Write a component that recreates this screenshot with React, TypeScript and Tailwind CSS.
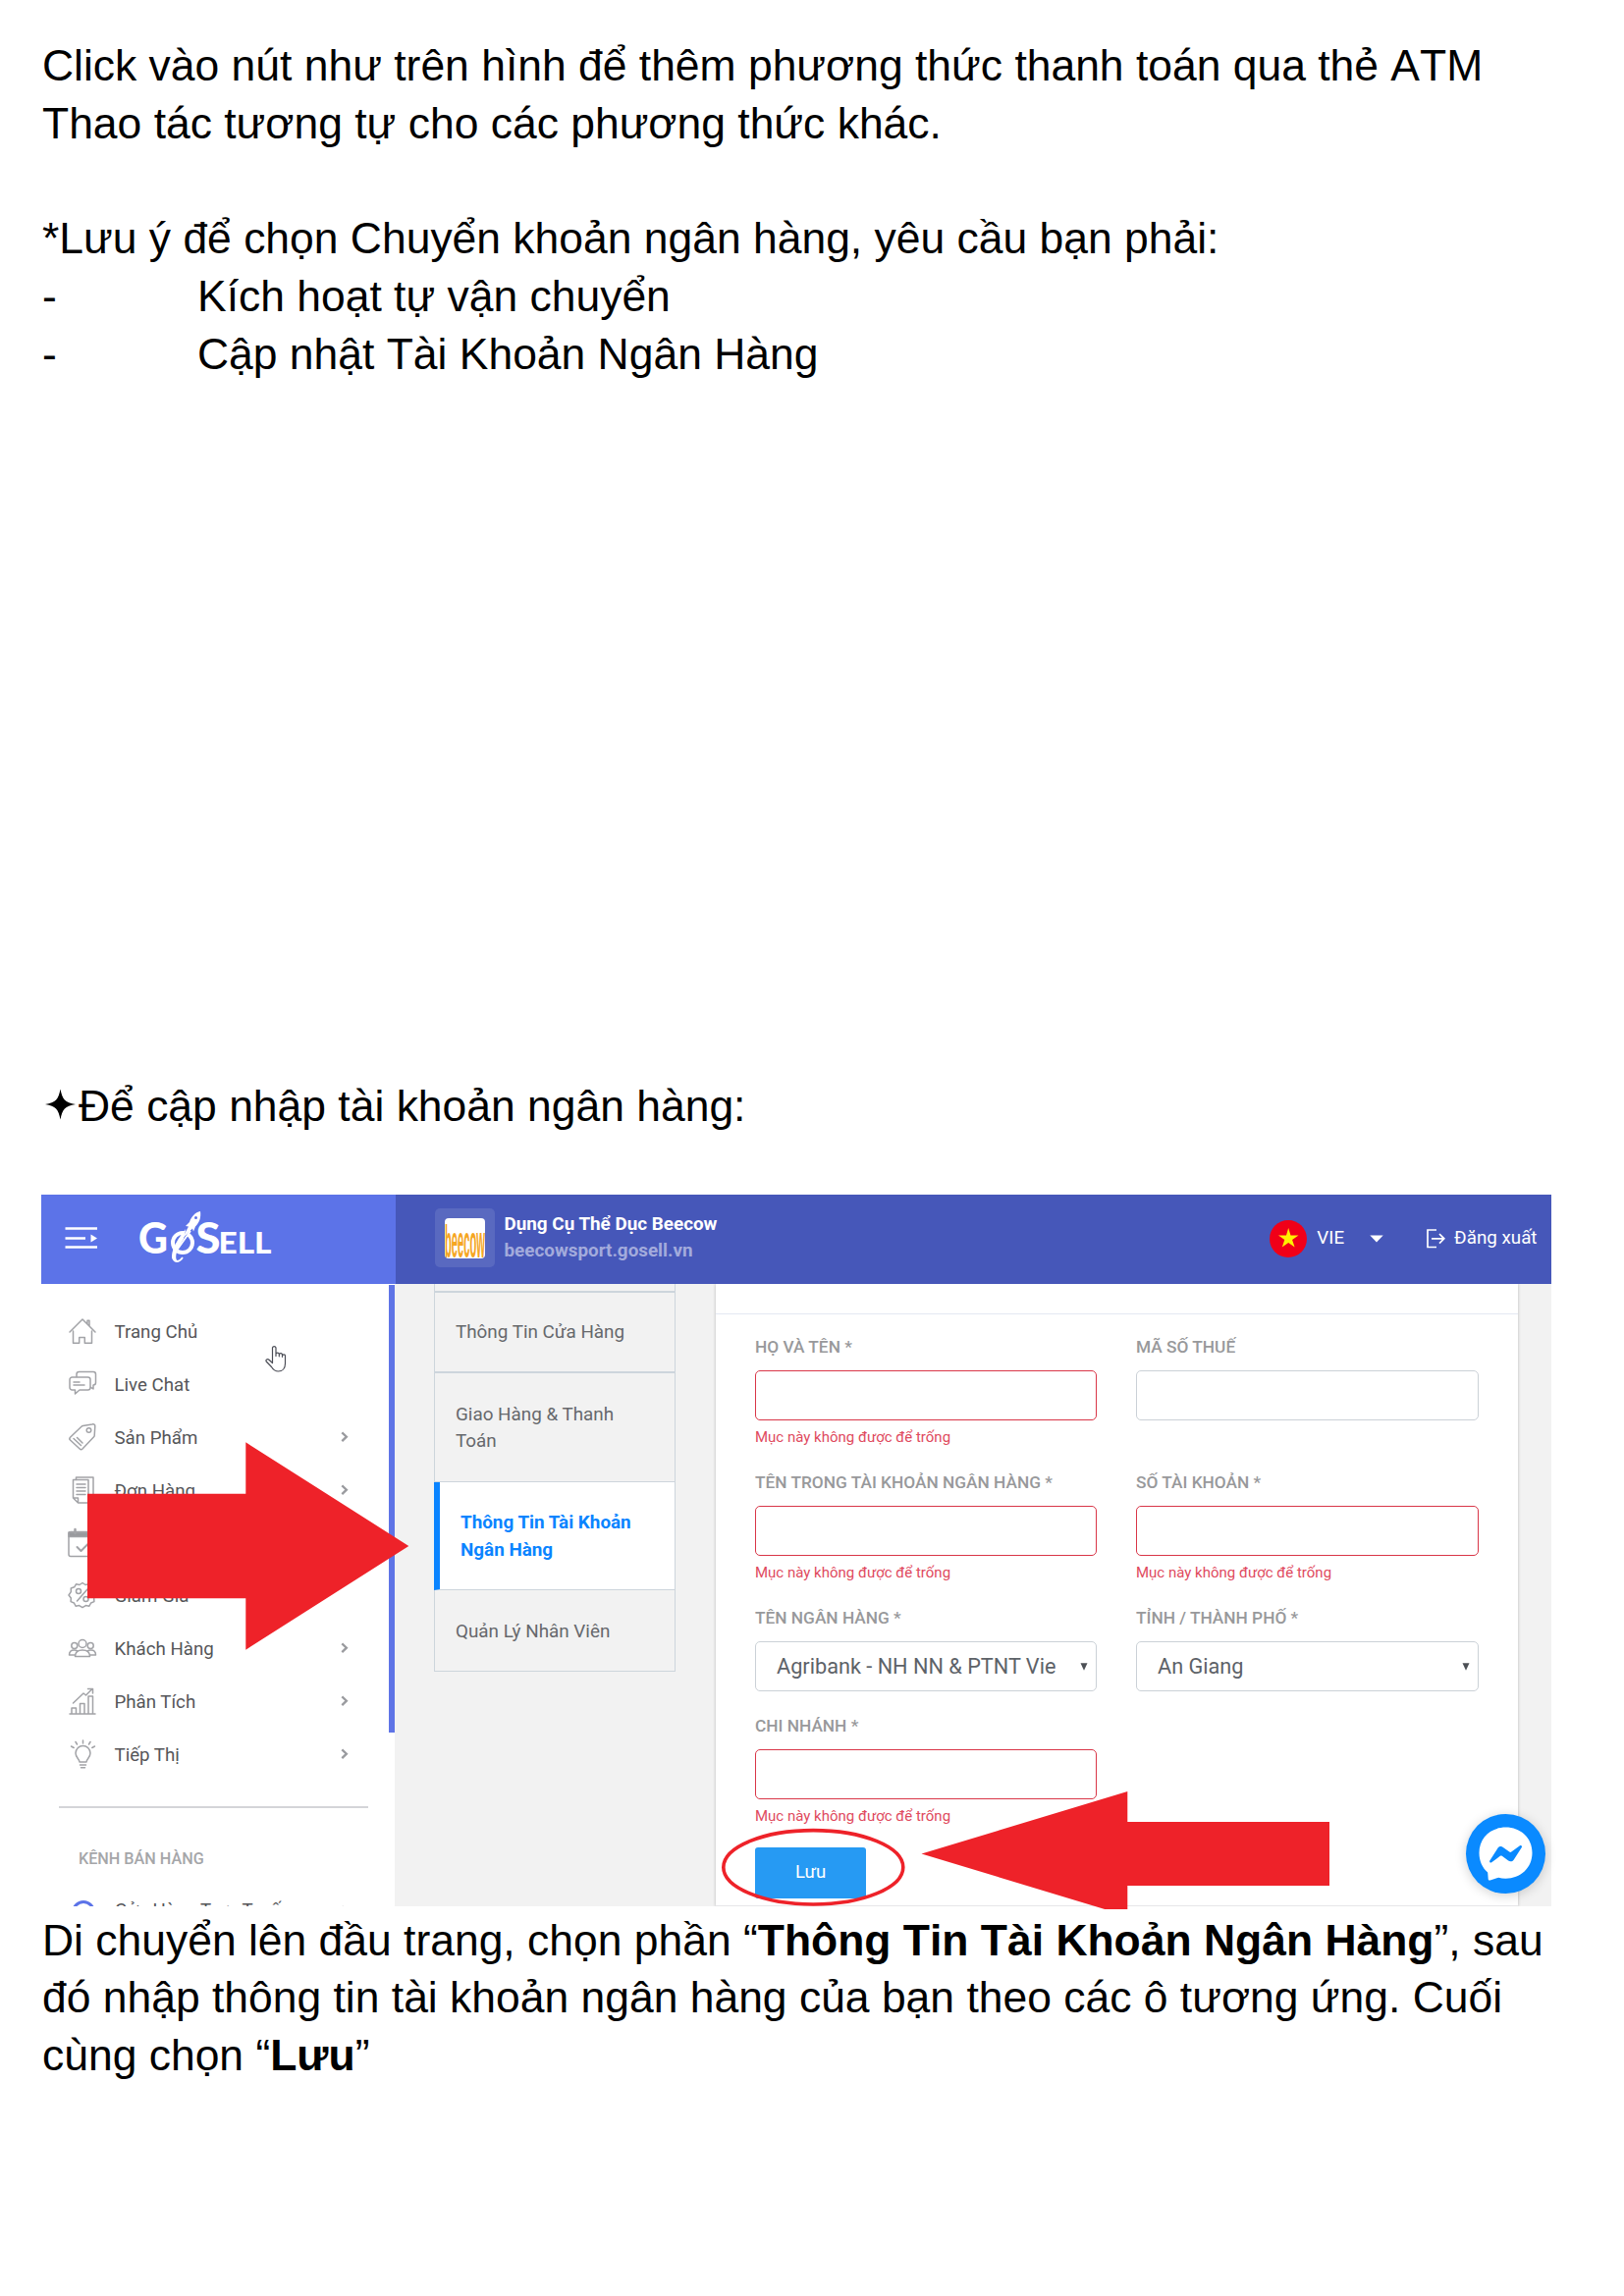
import React from 'react';

const DOC = "font-['Liberation_Sans',Arial,sans-serif] text-[44.44px] leading-[58.78px] text-black whitespace-nowrap [font-kerning:none]";

type IconProps = { children: React.ReactNode };

function NavIcon({ children }: IconProps) {
  return (
    <svg
      width="28"
      height="28"
      viewBox="0 0 28 28"
      fill="none"
      stroke="#a2a3a7"
      strokeWidth="1.5"
      strokeLinecap="round"
      strokeLinejoin="round"
      className="shrink-0 overflow-visible"
    >
      {children}
    </svg>
  );
}

const navItems: { label: string; arrow: boolean; icon: React.ReactNode }[] = [
  {
    label: 'Trang Chủ',
    arrow: false,
    icon: (
      <path d="M1 15 14 2l13 13M4.5 14v12.3h6.2v-5.8h5.6v5.8h7.2V14M19 6.5V3.2h2v5.5" />
    ),
  },
  {
    label: 'Live Chat',
    arrow: false,
    icon: (
      <>
        <path d="M3.5 7h16a2.5 2.5 0 0 1 2.5 2.5v8a2.5 2.5 0 0 1-2.5 2.5H11l-4.5 4v-4h-3A2.5 2.5 0 0 1 1 17.500v-8A2.500 2.500 0 0 1 3.500 7zM5 12h6M5 15h11" />
        <path d="M8 6.500V4a2.500 2.500 0 0 1 2.500-2.500H25A2.500 2.500 0 0 1 27.500 4v8.500A2.500 2.500 0 0 1 25 15v4l-2.500-1.700" />
      </>
    ),
  },
  {
    label: 'Sản Phẩm',
    arrow: true,
    icon: (
      <>
        <path d="M14.500 2.500 24 1a2 2 0 0 1 2.800 2l-.6 9.500a2 2 0 0 1-.6 1.300L14 26a2 2 0 0 1-2.800 0L1.500 17a2 2 0 0 1 0-2.800L13 3.200a3 3 0 0 1 1.500-.7z" />
        <circle cx="20.500" cy="7" r="2.300" />
        <path d="m5 15.500 7.500 7M8.500 14.500l5.500 5.500" />
      </>
    ),
  },
  {
    label: 'Đơn Hàng',
    arrow: true,
    icon: (
      <>
        <path d="M4.500 3.500H20V27H9.500l-5-5zM4.500 22h5v5" />
        <path d="M7.500 3.500V1H25v21.500h-5M8 8h9M8 11.500h9M8 15h9M8 18.500h9" />
      </>
    ),
  },
  {
    label: 'Đặt Chỗ',
    arrow: true,
    icon: (
      <>
        <rect x="0" y="2.500" width="28" height="25" rx="2" />
        <path d="M0 3h28v4.500H0z" fill="#98999d" />
        <path d="M6.500 0v4M21.500 0v4" strokeWidth="2.500" />
        <path d="m8.500 18 4 4 7.500-7.500" strokeWidth="2" />
      </>
    ),
  },
  {
    label: 'Giảm Giá',
    arrow: false,
    icon: (
      <>
        <path d="m14 1.500 3 2 3.500-.7 1.800 3 3.400 1.200v3.600L28 14l-2.300 3 .2 3.600-3.300 1.400-1.700 3.200-3.600-.6-3.300 2-3.300-2-3.600.6-1.700-3.200L2.100 20.600l.2-3.600L0 14l2.300-3.400V7l3.400-1.200 1.800-3 3.500.7z" />
        <circle cx="10" cy="10" r="2.500" />
        <circle cx="17.500" cy="18" r="2.500" />
        <path d="m19 8-10.500 12" />
      </>
    ),
  },
  {
    label: 'Khách Hàng',
    arrow: true,
    icon: (
      <>
        <circle cx="14" cy="9.500" r="4" />
        <circle cx="5.800" cy="11.500" r="3" />
        <circle cx="22.200" cy="11.500" r="3" />
        <path d="M6.500 22.500c0-4.500 3-6.500 7.500-6.500s7.500 2 7.500 6.500zM6 21H.5c0-3.500 2-5 5-5 1.500 0 2.500.2 3.300.8M22 21h5.500c0-3.500-2-5-5-5-1.500 0-2.500.2-3.300.8" />
      </>
    ),
  },
  {
    label: 'Phân Tích',
    arrow: true,
    icon: (
      <path d="M1 27h26M3 27v-6h4.500v6M11.500 27V16.500H16V27M20 27V9h4.500v18M4.500 16 15 6l2.500 2L24 1.500M19.500 1.500H24.500V6" />
    ),
  },
  {
    label: 'Tiếp Thị',
    arrow: true,
    icon: (
      <path d="M11 22c0-3-4-4.500-4-9a7.500 7.500 0 0 1 15 0c0 4.500-4 6-4 9zM11.500 25h6M12.500 27.700h4M14.500 0v3M7 1.500l1.500 2.500M22 1.500 20.500 4M2.500 6l2.700 1.500M26.500 6l-2.700 1.500" />
    ),
  },
];

function Chevron() {
  return (
    <svg width="8" height="12" viewBox="0 0 8 12" fill="none" stroke="#9a9b9f" strokeWidth="2.300" className="shrink-0">
      <path d="m1.300 1.300 4.600 4.400-4.600 4.400" />
    </svg>
  );
}

function Logo() {
  return (
    <svg width="140" height="60" viewBox="0 0 140 60" className="shrink-0 overflow-visible">
      <g fill="#fff" fontFamily="Lato, sans-serif" fontWeight="900">
        <text x="0" y="45" fontSize="44" textLength="30" lengthAdjust="spacingAndGlyphs">G</text>
        <text x="58.500" y="45" fontSize="44" textLength="25" lengthAdjust="spacingAndGlyphs">S</text>
        <text x="81.500" y="45" fontSize="30" textLength="54" lengthAdjust="spacingAndGlyphs">ELL</text>
      </g>
      <ellipse cx="45" cy="34" rx="10" ry="10" fill="none" stroke="#fff" strokeWidth="4" />
      <path d="M32 52 56 12" stroke="#5c73e8" strokeWidth="3" />
      <path d="M63 2c-5 1-9 5-11 11l-4 4 3 .5-7 13 11-11 1 3 2-5c4-4 6-9 5-15.500z" fill="#fff" />
      <circle cx="58.500" cy="8.500" r="1.500" fill="#5c73e8" />
      <path d="M53 22 36 46c-1 4 0 7 3 7 2 0 4-1 6-4" fill="none" stroke="#fff" strokeWidth="1.800" />
      <path d="M48 20c-8 10-14 20-14 28 0 4 3 6 6 5-4-4-1-12 6-23z" fill="#fff" />
    </svg>
  );
}

function Header() {
  return (
    <div className="flex h-[90.500px] w-full shrink-0 font-[Roboto,sans-serif]">
      <div className="flex w-[361px] shrink-0 bg-[#5c73e8] pl-6">
        <svg width="34" height="24" viewBox="0 0 34 24" className="mt-[32px] shrink-0" stroke="#fff" strokeWidth="2.600" fill="none">
          <path d="M.5 2.500H33M.5 12.500H21M.5 21.500H33" />
          <path d="m26.500 8.500 6.500 4-6.500 4z" fill="#fff" stroke="none" />
        </svg>
        <div className="ml-[41px] mt-[15px]">
          <Logo />
        </div>
      </div>
      <div className="flex flex-1 bg-[#4657b9] pl-10 text-white">
        <div className="mt-[14px] flex h-[60px] w-[61px] shrink-0 items-center justify-center rounded-[5px] bg-[#5969c0]">
          <svg width="41" height="41" viewBox="0 0 41 41" className="overflow-hidden rounded-[4px] bg-white">
            <text
              x="0"
              y="0"
              transform="translate(0 40.300) scale(1 2.750)"
              fontFamily="Liberation Sans, sans-serif"
              fontWeight="700"
              fontSize="16.500"
              textLength="41"
              lengthAdjust="spacingAndGlyphs"
              fill="#f5a623"
            >
              beecow
            </text>
          </svg>
        </div>
        <div className="ml-[9.500px] mt-[16.500px] flex flex-col text-[18.850px] font-bold leading-[27.500px]">
          <span>Dụng Cụ Thể Dục Beecow</span>
          <span className="text-[#a3abdc]">beecowsport.gosell.vn</span>
        </div>
        <div className="ml-auto mr-[14.500px] flex h-[89px] items-center text-[18.800px]">
          <svg width="38" height="38" viewBox="0 0 38 38" className="mr-[10px]">
            <circle cx="19" cy="19" r="19" fill="#f00018" />
            <path d="m19.200 8 2.300 7.500 8-.1-6.400 4.700 2.500 7.500-6.400-4.600-6.400 4.600 2.500-7.500L9 15.400l8 .1z" fill="#fff200" />
          </svg>
          <span>VIE</span>
          <svg width="14" height="8" viewBox="0 0 14 8" className="ml-[26px] mr-[44px] mt-px">
            <path d="M.3.500h13.400L7 7.500z" fill="#fff" />
          </svg>
          <svg width="19" height="20" viewBox="0 0 19 20" fill="none" stroke="#fff" strokeWidth="1.700" className="mr-[9px]">
            <path d="M10 1H1v17.500h9M5 9.800h12.500M13 5l4.800 4.800-4.800 4.800" />
          </svg>
          <span>Đăng xuất</span>
        </div>
      </div>
    </div>
  );
}

function Sidebar() {
  return (
    <div className="flex w-[360px] shrink-0 bg-white">
      <div className="flex w-[354px] flex-col pt-[22px]">
        {navItems.map((item) => (
          <div key={item.label} className="flex h-[53.800px] shrink-0 items-center pl-[27.500px] pr-[41px]">
            <NavIcon>{item.icon}</NavIcon>
            <span className="ml-[19px] flex-1 pt-[2px] text-[18.700px] text-[#555659]">{item.label}</span>
            {item.arrow && <Chevron />}
          </div>
        ))}
        <div className="ml-[18px] mt-[26.500px] h-[1.500px] w-[315px] shrink-0 bg-[#d4d5d8]" />
        <div className="mt-[38.500px] pl-[38px] text-[16.200px] font-medium leading-7 text-[#a5a6a9]">KÊNH BÁN HÀNG</div>
        <div className="mt-[23px] flex h-[28px] shrink-0 items-start pl-[31px] pr-[41px]">
          <svg width="24" height="24" viewBox="0 0 24 24" className="mt-[5px] shrink-0">
            <circle cx="12" cy="12" r="10.500" fill="none" stroke="#5c73e8" strokeWidth="3" />
            <path d="M3 9h18" stroke="#c5cdf7" strokeWidth="3" />
          </svg>
          <span className="ml-[20px] flex-1 text-[18.700px] leading-[30px] text-[#555659]">Cửa Hàng Trực Tuyến</span>
          <span className="mt-[10px]">
            <Chevron />
          </span>
        </div>
      </div>
      <div className="mt-[1.500px] h-[455.500px] w-[6.500px] bg-[#5f74e6]" />
    </div>
  );
}

function SettingsTabs() {
  return (
    <div className="ml-10 w-[246px] shrink-0 self-start border-x border-[#cdd5dc] text-[18.850px] leading-[27.700px] text-[#66686c]">
      <div className="h-[9px] border-b-2 border-[#cdd5dc]" />
      <div className="flex h-[82.500px] items-center border-b-2 border-[#cdd5dc] pl-[21px] pt-[3px]">Thông Tin Cửa Hàng</div>
      <div className="flex h-[110.500px] items-center border-b border-[#cdd5dc] pl-[21px] pr-10 pt-[3px]">Giao Hàng &amp; Thanh Toán</div>
      <div className="-ml-px flex h-[110.500px] items-center border-b border-l-[6px] border-b-[#cdd5dc] border-l-[#0a84ff] bg-white pl-[21px] pr-[38px] pt-[3px] font-bold text-[#0a84ff]">
        Thông Tin Tài Khoản Ngân Hàng
      </div>
      <div className="flex h-[82.500px] items-center border-b border-[#cdd5dc] pl-[21px] pt-[4px]">Quản Lý Nhân Viên</div>
    </div>
  );
}

function Field({ label, error, select }: { label: string; error?: boolean; select?: string }) {
  return (
    <div className="flex flex-col">
      <div className="h-[37px] shrink-0 text-[17.300px] font-medium leading-[26px] text-[#98999b]">{label}</div>
      <div
        className={
          'flex h-[51px] shrink-0 items-center rounded-[5px] border bg-white ' +
          (error ? 'border-[#d93648]' : 'border-[#cbd1d7]')
        }
      >
        {select && (
          <>
            <span className="ml-[21px] w-[284px] overflow-hidden whitespace-nowrap text-[21.700px] leading-8 text-[#5d6268]">
              {select}
            </span>
            <svg width="8" height="8" viewBox="0 0 8 8" className="ml-auto mr-[8px]">
              <path d="M.5.300h7L4 7.700z" fill="#4c5055" />
            </svg>
          </>
        )}
      </div>
      {error && <div className="mt-[5px] text-[15px] leading-6 text-[#e04a5e]">Mục này không được để trống</div>}
    </div>
  );
}

function BankForm() {
  return (
    <div className="ml-[41px] flex w-[817px] shrink-0 flex-col border-b border-[#e6e6e8] bg-white shadow-[0_0_3px_rgba(0,0,0,0.25)]">
      <div className="h-[31px] shrink-0 border-b border-[#e4e8f2]" />
      <div className="grid grid-cols-[348px_349px] grid-rows-[138px_138px_110px_99.500px] gap-x-10 pl-[40px] pt-[20.500px]">
        <Field label="HỌ VÀ TÊN *" error />
        <Field label="MÃ SỐ THUẾ" />
        <Field label="TÊN TRONG TÀI KHOẢN NGÂN HÀNG *" error />
        <Field label="SỐ TÀI KHOẢN *" error />
        <Field label="TÊN NGÂN HÀNG *" select="Agribank - NH NN & PTNT Vietnam" />
        <Field label="TỈNH / THÀNH PHỐ *" select="An Giang" />
        <Field label="CHI NHÁNH *" error />
      </div>
      <div className="ml-[40px] mt-[37px] flex h-[52px] w-[113px] shrink-0 items-center justify-center rounded-[3px] bg-[#269af3] text-[18.500px] text-white">
        Lưu
      </div>
    </div>
  );
}

function Annotations() {
  return (
    <svg width="1538" height="728" viewBox="42 1217 1538 728" className="pointer-events-none absolute left-0 top-0">
      <path d="M89 1521.700H250.300V1469.300L416.300 1575 250.300 1680.700V1628.300H89z" fill="#ee2229" />
      <ellipse cx="828.300" cy="1902.300" rx="91.500" ry="37.700" fill="none" stroke="#ee2229" strokeWidth="3.600" />
      <path d="M938.500 1888.500 1148.300 1825V1856H1354V1921H1148.300V1952z" fill="#ee2229" />
    </svg>
  );
}

function Screenshot() {
  return (
    <div className="relative ml-[42px] h-[725px] w-[1538px] shrink-0 font-[Roboto,sans-serif]">
      <div className="flex h-full flex-col overflow-hidden">
        <Header />
        <div className="flex h-[634.500px] shrink-0 overflow-hidden bg-[#f2f2f2]">
          <Sidebar />
          <SettingsTabs />
          <BankForm />
        </div>
      </div>
      <svg width="22" height="28" viewBox="0 0 22 28" className="absolute left-[228px] top-[153px]" fill="#fff" stroke="#4a4c55" strokeWidth="1.200" strokeLinejoin="round">
        <path d="M7.500 16V3a1.800 1.800 0 0 1 3.500 0v8.500V9.300a1.700 1.700 0 0 1 3.300.2v2.300-1.600a1.600 1.600 0 0 1 3.200.2v1.900-1.100a1.500 1.500 0 0 1 3 .3V19c0 5-3 8-7 8-4 0-5.500-2-7-4.500L1.200 17c-1-1.800 1.200-3.200 2.800-1.800l3.500 3.300z" />
      </svg>
      <div className="absolute left-[1450.500px] top-[631px] flex size-[81px] items-center justify-center rounded-full bg-[#0a8aff] shadow-[0_2px_12px_rgba(0,0,0,0.18)]">
        <svg width="55" height="55" viewBox="0 0 55 55">
          <path d="M27.500.500C42.500.500 54.500 11 54.500 26.500S42.500 52.700 27.500 52.700c-2.600 0-5-.3-7.300-.9l-8.500 2.700c-1.200.3-2-.3-2-1.500l-.5-6.500C3.500 41.500.5 34.500.5 26.500.5 11 12.500.500 27.500.500z" fill="#fff" />
          <path d="m11.300 34.500 8-12.500c1.200-2 3.800-2.500 5.600-1.100l6.400 4.700c.6.400 1.400.4 2 0l8.600-6.400c1.200-.9 2.700.5 1.900 1.700l-8 12.500c-1.200 2-3.800 2.500-5.600 1.100l-6.400-4.700c-.6-.4-1.400-.4-2 0l-8.600 6.400c-1.200.9-2.700-.5-1.900-1.700z" fill="#0a8aff" />
        </svg>
      </div>
      <Annotations />
    </div>
  );
}

export default function App() {
  return (
    <div className="flex h-[2339px] w-[1654px] flex-col overflow-hidden bg-white">
      <div className={'h-[1060px] shrink-0 pl-[43px] pt-[38px] ' + DOC}>
        <p>Click vào nút như trên hình để thêm phương thức thanh toán qua thẻ ATM</p>
        <p>Thao tác tương tự cho các phương thức khác.</p>
        <p className="h-[58.780px]" />
        <p>*Lưu ý để chọn Chuyển khoản ngân hàng, yêu cầu bạn phải:</p>
        <p className="flex">
          <span className="w-[158px]">-</span>Kích hoạt tự vận chuyển
        </p>
        <p className="flex">
          <span className="w-[158px]">-</span>Cập nhật Tài Khoản Ngân Hàng
        </p>
      </div>
      <div className={'flex h-[157px] shrink-0 pl-[43px] pt-[38px] ' + DOC}>
        <svg width="37" height="34" viewBox="0 0 37 34" className="mt-[10px] shrink-0">
          <path d="M18.500 1.500C20.500 12 23 15 34 17 23 19 20.500 22 18.500 32.500 16.500 22 14 19 3 17 14 15 16.500 12 18.500 1.500z" fill="#000" />
        </svg>
        <p>Để cập nhập tài khoản ngân hàng:</p>
      </div>
      <Screenshot />
      <div className={'pl-[43px] pt-[5.500px] ' + DOC}>
        <p>
          Di chuyển lên đầu trang, chọn phần “<b>Thông Tin Tài Khoản Ngân Hàng</b>”, sau
        </p>
        <p>đó nhập thông tin tài khoản ngân hàng của bạn theo các ô tương ứng. Cuối</p>
        <p>
          cùng chọn “<b>Lưu</b>”
        </p>
      </div>
    </div>
  );
}
